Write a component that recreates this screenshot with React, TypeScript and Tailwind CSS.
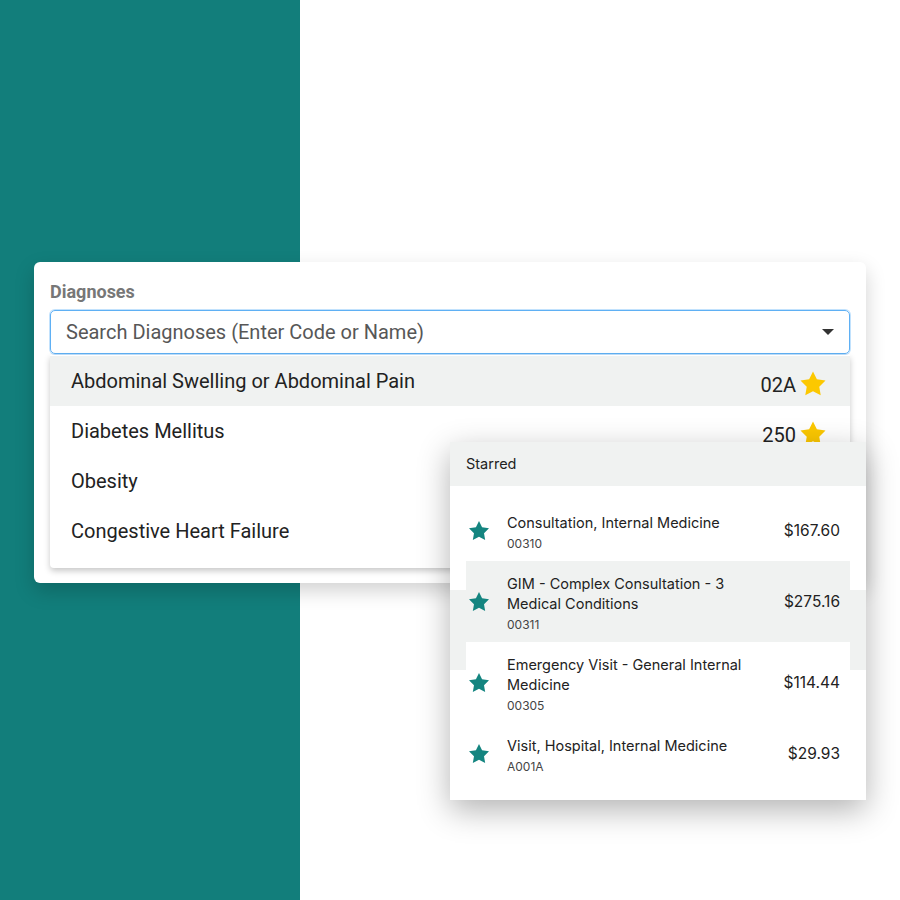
import React from 'react';

const Star = ({ className }: { className: string }) => (
  <svg viewBox="0 0 24 24" className={className} fill="currentColor">
    <path d="M12 2l3.09 6.26L22 9.27l-5 4.87 1.18 6.88L12 17.77l-6.18 3.25L7 14.14 2 9.27l6.91-1.01L12 2z" />
  </svg>
);

const App = () => {
  const diagnoses = [
    { name: 'Abdominal Swelling or Abdominal Pain', code: '02A', active: true },
    { name: 'Diabetes Mellitus', code: '250', active: false },
    { name: 'Obesity', code: '', active: false },
    { name: 'Congestive Heart Failure', code: '', active: false },
  ];

  const starred = [
    { title: 'Consultation, Internal Medicine', code: '00310', price: '$167.60', bg: 'bg-white' },
    { title: 'GIM - Complex Consultation - 3 Medical Conditions', code: '00311', price: '$275.16', bg: 'bg-[#f0f2f1]' },
    { title: 'Emergency Visit - General Internal Medicine', code: '00305', price: '$114.44', bg: 'bg-white' },
    { title: 'Visit, Hospital, Internal Medicine', code: 'A001A', price: '$29.93', bg: 'bg-white' },
  ];

  return (
    <div className="relative w-[900px] h-[900px] flex overflow-hidden bg-white">
      {/* backdrop */}
      <div className="w-[300px] h-full bg-[#127e7b]" />
      <div className="flex-1 h-full bg-white" />

      {/* Diagnoses card */}
      <div className="absolute left-[34px] top-[262px] w-[832px] h-[321px] bg-white rounded-md shadow-[0_8px_20px_rgba(0,0,0,0.18)] px-4 pt-[18px] font-['Roboto',sans-serif]">
        <div className="text-[18px] leading-6 font-bold text-[#777]">Diagnoses</div>
        <div className="mt-[6px] relative">
          <div className="h-[44px] flex items-center justify-between border border-[#5fb0f4] rounded-[5px] shadow-[0_0_0_1px_rgba(120,190,250,0.45)] pl-[15px] pr-[15px]">
            <span className="text-[20px] text-[#575757]">Search Diagnoses (Enter Code or Name)</span>
            <span className="w-0 h-0 border-l-[6px] border-r-[6px] border-t-[6px] border-l-transparent border-r-transparent border-t-[#333]" />
          </div>
          <div className="absolute left-0 right-0 top-[45px] bg-white rounded-b-[4px] shadow-[0_3px_6px_rgba(0,0,0,0.22)] pt-[1px] pb-[12px]">
            {diagnoses.map((d) => (
              <div
                key={d.name}
                className={`h-[50px] flex items-center justify-between pl-[21px] pr-[22px] ${d.active ? 'bg-[#f0f2f1]' : 'bg-white'}`}
              >
                <span className="text-[20px] text-[#222]">{d.name}</span>
                {d.code && (
                  <span className="flex items-center gap-[2px] mt-[6px]">
                    <span className="text-[20px] text-[#222] mt-[2px]">{d.code}</span>
                    <Star className="w-[30px] h-[30px] text-[#fcc800]" />
                  </span>
                )}
              </div>
            ))}
          </div>
        </div>
      </div>

      {/* Starred panel */}
      <div className="absolute left-[450px] top-[442px] w-[416px] h-[358px] bg-white shadow-[0_10px_30px_rgba(0,0,0,0.3)] font-['Inter',sans-serif]">
        <div className="absolute left-0 right-0 top-[148px] h-[80px] bg-[#f0f2f1]" />
        <div className="h-[44px] bg-[#f0f2f1] flex items-center px-4 text-[14.5px] text-[#222]">Starred</div>
        <div className="relative px-4 pt-[14px]">
          {starred.map((s) => (
            <div key={s.code} className={`flex items-center ${s.bg}`}>
              <Star className="w-6 h-6 ml-[1px] text-[#148580] shrink-0" />
              <div className="ml-[16px] w-[250px] pt-[13px] pb-[9px]">
                <div className="text-[14.5px] leading-5 text-[#222]">{s.title}</div>
                <div className="text-[12px] leading-4 mt-[3px] text-[#444]">{s.code}</div>
              </div>
              <div className="ml-auto pr-[10px] text-[15.5px] text-[#222]">{s.price}</div>
            </div>
          ))}
        </div>
      </div>
    </div>
  );
};

export default App;
